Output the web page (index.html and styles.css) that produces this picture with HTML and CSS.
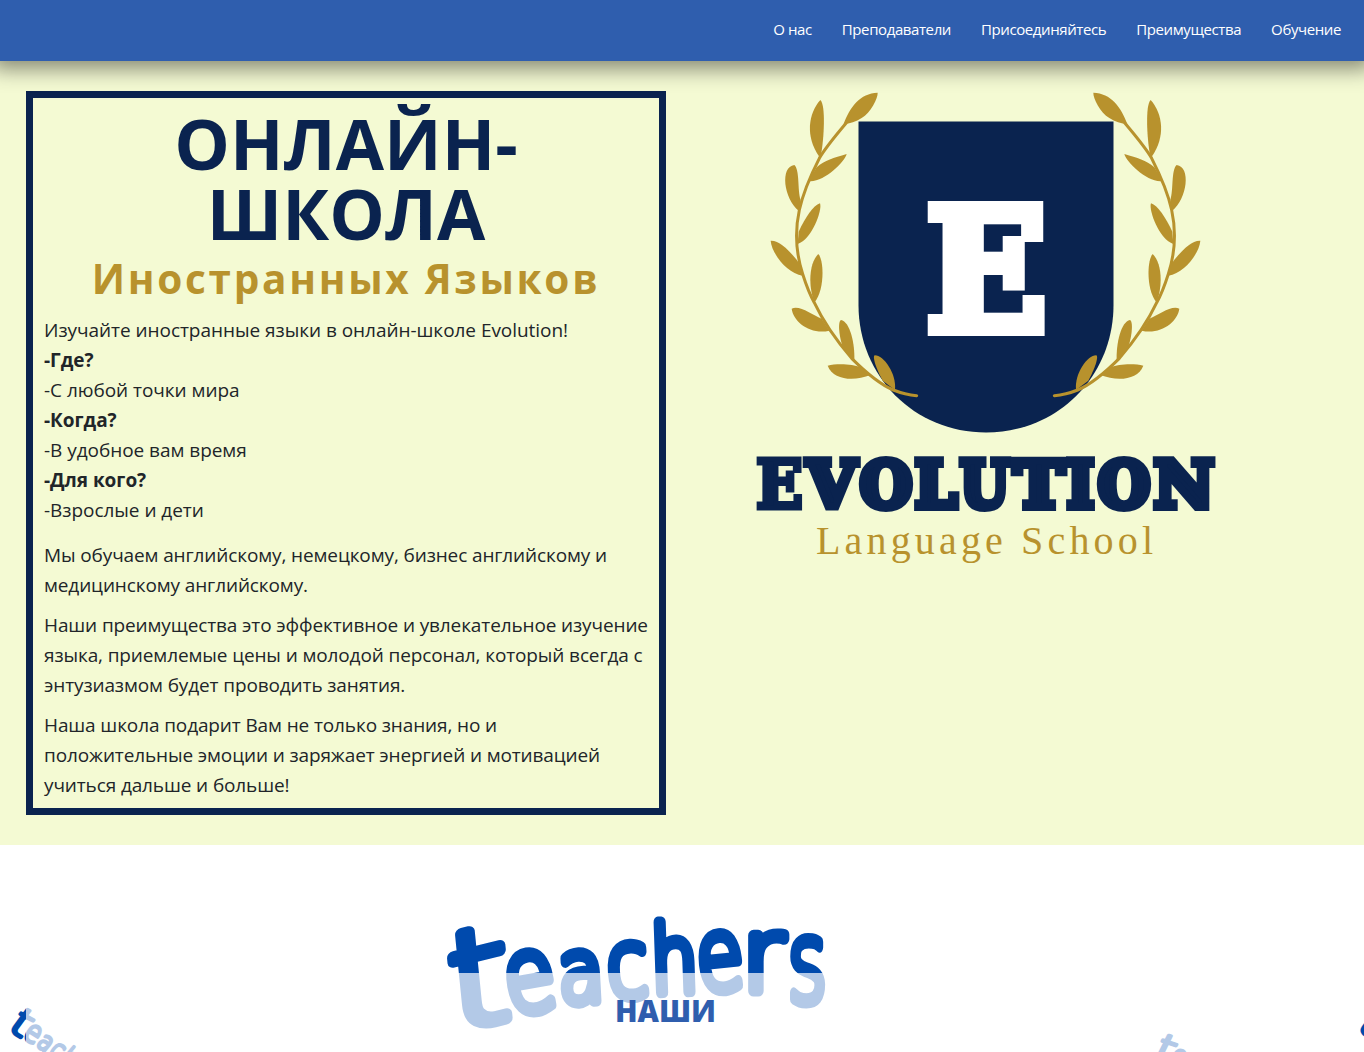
FILE: index.html
```html
<!DOCTYPE html>
<html lang="ru">
<head>
<meta charset="utf-8">
<title>Evolution</title>
<link rel="stylesheet" href="styles.css">
</head>
<body>
<header class="header">
  <nav class="nav">
    <a>О нас</a><a>Преподаватели</a><a>Присоединяйтесь</a><a>Преимущества</a><a>Обучение</a>
  </nav>
</header>
<main>
  <section class="hero">
    <article class="about">
      <h1 class="title">ОНЛАЙН-<br>ШКОЛА</h1>
      <h2 class="subtitle">Иностранных Языков</h2>
      <p class="intro">Изучайте иностранные языки в онлайн-школе Evolution!<br>
        <b>-Где?</b><br>-С любой точки мира<br>
        <b>-Когда?</b><br>-В удобное вам время<br>
        <b>-Для кого?</b><br>-Взрослые и дети</p>
      <p>Мы обучаем английскому, немецкому, бизнес английскому и<br>медицинскому английскому.</p>
      <p>Наши преимущества это эффективное и увлекательное изучение<br>языка, приемлемые цены и молодой персонал, который всегда с<br>энтузиазмом будет проводить занятия.</p>
      <p>Наша школа подарит Вам не только знания, но и<br>положительные эмоции и заряжает энергией и мотивацией<br>учиться дальше и больше!</p>
    </article>
    <svg class="logo" width="480" height="490" viewBox="746 91 480 490">
      <defs>
        <g id="laurel" transform="translate(750 80) scale(.33333)">
          <path class="stem" d="M288 130C250 175 225 205 208 235C185 280 160 335 148 390C135 450 138 520 158 582C170 620 180 645 193 668C215 715 245 765 305 835C350 880 395 915 430 930C450 938 475 945 500 947"/>
          <path d="M280 134C300 80 330 40 383 38C384 55 362 98 335 114C318 125 300 130 280 134Z"/>
          <path d="M208 230C165 170 175 100 211 60C228 75 222 180 212 230Z"/>
          <path d="M175 303L200 262C225 240 250 234 290 222C285 245 220 310 175 303Z"/>
          <path d="M147 393C100 355 90 260 133 255C150 270 142 330 152 360Z"/>
          <path d="M143 492L146 455C165 415 190 375 210 370C218 390 185 480 143 492Z"/>
          <path d="M158 587C110 580 65 520 62 482C92 480 130 525 150 553Z"/>
          <path d="M193 668C172 610 180 545 205 522C222 540 225 630 193 668Z"/>
          <path d="M238 752C180 765 130 725 125 686C150 675 185 705 215 716Z"/>
          <path d="M313 842L280 805C268 775 262 725 273 720C300 725 315 790 313 842Z"/>
          <path d="M362 885C310 905 250 900 233 857C260 850 310 852 330 862Z"/>
          <path d="M435 930L398 902C380 870 366 830 374 826C400 825 440 880 435 930Z"/>
        </g>
      </defs>
      <path class="shield" d="M858.5 121.5H1113.5V305C1113.5 376 1058 432.5 986 432.5C914 432.5 858.5 376 858.5 305Z"/>
      <g class="laurel"><use href="#laurel"/><use href="#laurel" transform="translate(1971 0) scale(-1 1)"/></g>
      <text class="slab crest" x="926" y="330" textLength="121" lengthAdjust="spacingAndGlyphs">E</text>
      <g class="slab word">
        <text class="open" x="756" y="508" textLength="47" lengthAdjust="spacingAndGlyphs">E</text>
        <text x="807" y="507" textLength="49" lengthAdjust="spacingAndGlyphs">V</text>
        <text x="860" y="507" textLength="52" lengthAdjust="spacingAndGlyphs">O</text>
        <text x="915" y="507" textLength="42" lengthAdjust="spacingAndGlyphs">L</text>
        <text x="960" y="507" textLength="49" lengthAdjust="spacingAndGlyphs">U</text>
        <text x="1014" y="507" textLength="50" lengthAdjust="spacingAndGlyphs">T</text>
        <text x="1067" y="507" textLength="27" lengthAdjust="spacingAndGlyphs">I</text>
        <text x="1098" y="507" textLength="52" lengthAdjust="spacingAndGlyphs">O</text>
        <text x="1154" y="507" textLength="60" lengthAdjust="spacingAndGlyphs">N</text>
      </g>
      <text class="tagline" x="816" y="554" textLength="337">Language School</text>
    </svg>
  </section>
  <section class="teachers">
    <svg class="doodles" width="1364" height="207" viewBox="0 845 1364 207">
      <defs>
        <g id="script">
          <text transform="matrix(1.15 -.28 .1 1 453 1032)" font-size="134">t</text>
          <text transform="translate(510 1015) rotate(-10) scale(.8 1)" font-size="104">e</text>
          <text transform="translate(560 1003) rotate(-3) scale(.84 1)" font-size="88">a</text>
          <text transform="translate(609 998) rotate(-4) scale(.8 1)" font-size="93">c</text>
          <text transform="translate(652 993) rotate(-2) scale(.8 1)" font-size="93">h</text>
          <text transform="translate(700 992) rotate(-6) scale(.76 1)" font-size="100">e</text>
          <text transform="translate(742 991)" font-size="102">r</text>
          <text transform="translate(788 1001) scale(.66 1)" font-size="113">s</text>
        </g>
      </defs>
      <g class="script">
        <use href="#script"/>
        <use href="#script" transform="translate(14 1018) rotate(42) scale(.3) translate(-447 -985)"/>
        <use href="#script" transform="translate(1157 1046) rotate(32) scale(.3) translate(-447 -985)"/>
        <use href="#script" transform="translate(1363 1018) rotate(42) scale(.3) translate(-447 -985)"/>
      </g>
    </svg>
    <div class="panel"><h2 class="heading">НАШИ</h2></div>
  </section>
</main>
</body>
</html>
```
FILE: styles.css
```css
* { box-sizing: border-box; }
body {
  margin: 0;
  height: 1052px;
  overflow: hidden;
  background: #fff;
  color: #212529;
  font-family: "Open Sans", "Noto Sans", sans-serif;
}
.header {
  position: relative;
  z-index: 2;
  height: 61px;
  padding-right: 23px;
  background: #2f5eae;
  box-shadow: 0 0 20px 8px rgba(0, 0, 0, .45);
}
.nav {
  display: flex;
  justify-content: flex-end;
  gap: 30px;
  color: #fff;
  font-size: 15px;
  line-height: 59px;
  letter-spacing: -.4px;
}
.hero {
  display: flex;
  align-items: flex-start;
  gap: 80px;
  height: 784px;
  padding: 30px 26px;
  background: #f4fad3;
}
.about {
  flex: none;
  width: 640px;
  height: 724px;
  padding: 6px 11px 0;
  border: 7px solid #0a234f;
  white-space: nowrap;
}
.title {
  height: 150px;
  margin: 0;
  padding-top: 4px;
  overflow: hidden;
  color: #0a234f;
  font-size: 70px;
  font-weight: 700;
  line-height: 70px;
  text-align: center;
}
.subtitle {
  margin: 0 0 11px;
  color: #b8922d;
  font-size: 40.5px;
  font-weight: 700;
  line-height: 50px;
  letter-spacing: 2.7px;
  text-align: center;
}
.about p {
  margin: 0 0 10px;
  font-size: 19px;
  line-height: 30px;
  letter-spacing: -.12px;
}
.about .intro { margin-bottom: 15px; letter-spacing: -.04px; }
.logo { flex: none; }
.laurel { fill: #b8922d; }
.stem { fill: none; stroke: #b8922d; stroke-width: 9; stroke-linecap: round; }
.shield { fill: #0a234f; }
.slab { font-family: "DejaVu Serif", serif; font-weight: 700; }
.crest { fill: #fff; stroke: #fff; stroke-width: 12; font-size: 168px; }
.word { fill: #0a234f; stroke: #0a234f; stroke-width: 8; font-size: 64px; }
.word .open { stroke-width: 5; font-size: 68px; }
.tagline { fill: #b8922d; font-family: "Liberation Serif", serif; font-size: 40px; }
.teachers { position: relative; height: 207px; padding: 128px 26px 0; overflow: hidden; }
.doodles { position: absolute; left: 0; top: 0; }
.script {
  fill: #004aad;
  stroke: #004aad;
  stroke-width: 11;
  stroke-linejoin: round;
  font-family: "DejaVu Sans", sans-serif;
  font-weight: 200;
}
.panel {
  position: relative;
  height: 79px;
  padding: 18px 33px 0 0;
  background: rgba(255, 255, 255, .7);
}
.heading {
  margin: 0;
  color: #2f5eae;
  font-size: 29.5px;
  font-weight: 800;
  line-height: 40px;
  text-align: center;
}
```
